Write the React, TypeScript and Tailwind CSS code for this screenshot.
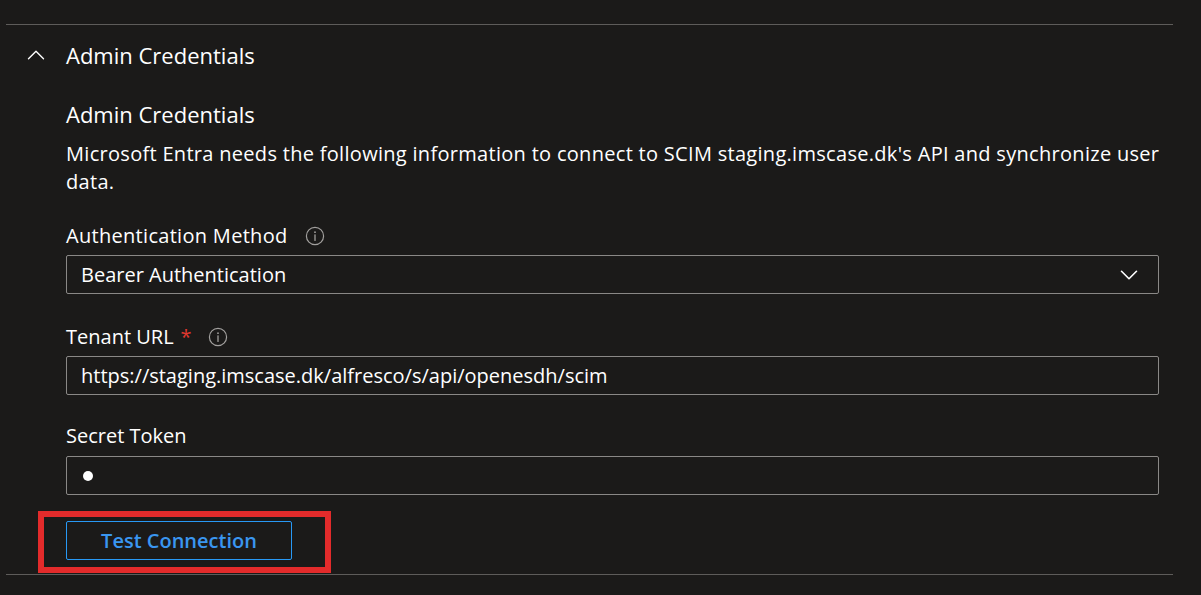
import { ChevronDown, ChevronUp } from "lucide-react";

const FONT = "font-['Segoe_UI','Open_Sans','Noto_Sans',sans-serif]";

function InfoIcon() {
  return (
    <svg width="20" height="20" viewBox="0 0 20 20" className="text-[#a19f9d]">
      <circle cx="10" cy="10" r="8.6" fill="none" stroke="currentColor" strokeWidth="1.2" />
      <circle cx="10" cy="6.2" r="0.9" fill="currentColor" />
      <path d="M10 8.8v5.6" stroke="currentColor" strokeWidth="1.3" strokeLinecap="round" />
    </svg>
  );
}

function Field({ children, className = "" }: { children: React.ReactNode; className?: string }) {
  return (
    <div
      className={`flex h-[39px] w-[1093px] items-center rounded-[2px] border border-[#8a8886] pl-[14px] pr-[13px] text-[20px] text-white ${className}`}
    >
      {children}
    </div>
  );
}

export default function App() {
  return (
    <div className={`h-[595px] w-full overflow-hidden bg-[#1b1a19] pt-[24px] text-white ${FONT}`}>
      <div className="ml-[6px] w-[1167px] border-t border-[#5e5c5a]" />

      <div className="flex h-[60px] items-center">
        <ChevronUp className="ml-[21px] h-[30px] w-[30px] text-white" strokeWidth={1.1} />
        <span className="ml-[15px] text-[22px] leading-none">Admin Credentials</span>
      </div>

      <div className="ml-[66px]">
        <div className="mt-[15px] text-[22px] leading-[28px]">Admin Credentials</div>
        <p className="mt-[12px] w-[1100px] text-[20px] leading-[28px] tracking-[0.3px]">
          Microsoft Entra needs the following information to connect to SCIM staging.imscase.dk's API and
          synchronize user data.
        </p>

        <div className="mt-[26px] flex h-[28px] items-center gap-[17px] text-[20px] tracking-[0.3px]">
          <span>Authentication Method</span>
          <InfoIcon />
        </div>
        <Field className="mt-[5px] justify-between">
          <span>Bearer Authentication</span>
          <ChevronDown className="mr-[1px] h-[30px] w-[30px] text-white" strokeWidth={1.3} />
        </Field>

        <div className="mt-[29px] flex h-[28px] items-center text-[20px]">
          <span>Tenant URL</span>
          <span className="ml-[7px] text-[#e0382f]">*</span>
          <span className="ml-[16px] flex">
            <InfoIcon />
          </span>
        </div>
        <Field className="mt-[5px]">https://staging.imscase.dk/alfresco/s/api/openesdh/scim</Field>

        <div className="mt-[27px] flex h-[28px] items-center text-[20px]">Secret Token</div>
        <Field className="mt-[6px]">
          <span className="ml-[2px] h-[10px] w-[10px] rounded-full bg-white" />
        </Field>
      </div>

      <div className="ml-[38px] mt-[16px] w-[293px] border-[6px] border-[#e32b2b] pb-[7px] pl-[22px] pt-[4px]">
        <button
          type="button"
          className="flex h-[39px] w-[226px] items-center justify-center rounded-[2px] border border-[#2899f5] text-[20px] font-semibold text-[#3a96f0]"
        >
          Test Connection
        </button>
      </div>
      <div className="ml-[6px] mt-[1px] w-[1167px] border-t border-[#5e5c5a]" />
    </div>
  );
}
